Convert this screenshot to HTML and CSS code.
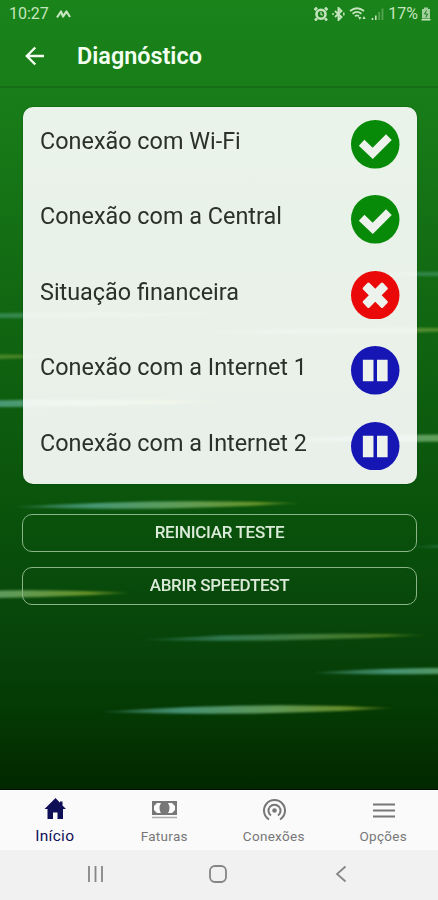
FILE: index.html
```html
<!DOCTYPE html>
<html lang="pt-BR">
<head>
    <meta charset="UTF-8">
    <meta name="viewport" content="width=device-width, initial-scale=1.0">
    <title>Diagnóstico</title>
    <link rel="stylesheet" href="styles.css">
</head>
<body>
    <div class="app">
        <!-- light streaks behind the content -->
        <svg class="streaks" viewBox="0 0 438 790" aria-hidden="true">
            <defs>
                <linearGradient id="streak">
                    <stop offset="0" stop-color="#5fae9c" stop-opacity="0.2"/>
                    <stop offset="0.28" stop-color="#56a890" stop-opacity="0.8"/>
                    <stop offset="0.6" stop-color="#78b06a" stop-opacity="0.8"/>
                    <stop offset="0.85" stop-color="#86a832" stop-opacity="0.75"/>
                    <stop offset="1" stop-color="#86a832" stop-opacity="0.2"/>
                </linearGradient>
                <filter id="soft" x="-5%" y="-100%" width="110%" height="300%">
                    <feGaussianBlur stdDeviation="0.8"/>
                </filter>
            </defs>
            <g fill="url(#streak)" filter="url(#soft)">
                <path opacity="0.55" d="M320 275Q440 269 640 273Q500 278 320 275Z"/>
                <path opacity="0.6" d="M-100 317Q0 310 240 314Q20 320 -100 317Z"/>
                <path opacity="0.75" d="M190 333Q360 325 500 329Q360 336 190 333Z"/>
                <path opacity="0.65" d="M-230 360Q-60 351 70 356Q-80 364 -230 360Z"/>
                <path d="M-90 405Q20 396 220 402Q20 410 -90 405Z"/>
                <path d="M250 440Q430 431 570 437Q430 445 250 440Z"/>
                <path d="M12 507Q160 498 302 503Q160 512 12 507Z"/>
                <path opacity="0.7" d="M410 547Q480 541 640 545Q500 550 410 547Z"/>
                <path d="M-160 597Q0 586 132 593Q0 601 -160 597Z"/>
                <path opacity="0.65" d="M140 640Q280 631 430 635Q280 643 140 640Z"/>
                <path d="M312 673Q400 665 600 669Q420 677 312 673Z"/>
                <path d="M100 712Q250 701 395 708Q250 717 100 712Z"/>
            </g>
        </svg>

        <header>
            <div class="status">
                <span>10:27</span>
                <svg class="activity" width="16" height="10" viewBox="0 0 16 10">
                    <path d="M1 8.500L5 2.500L7 7.500L10.500 2.500L14 8" fill="none" stroke="currentColor" stroke-width="2.200" stroke-linejoin="round"/>
                </svg>
                <div class="status-icons">
                    <svg width="14" height="14" viewBox="0 0 14 14">
                        <path d="M0.500 3L3 0.500M13.500 3L11 0.500M3 11.500L1 13.500M11 11.500l2 2" stroke="currentColor" stroke-width="2.500"/>
                        <circle cx="7" cy="7.200" r="4.500" fill="none" stroke="currentColor" stroke-width="2.600"/>
                        <path d="M7 4.800v2.600l1.800.9" fill="none" stroke="currentColor" stroke-width="1.200"/>
                    </svg>
                    <svg width="13" height="14" viewBox="0 0 13 14">
                        <path d="M3 4l6.500 6L6.500 13V1l3 3L3 10" fill="none" stroke="currentColor" stroke-width="1.900"/>
                        <path d="M1 6v2M11.800 5.500v3" stroke="currentColor" stroke-width="1.500"/>
                    </svg>
                    <svg width="18" height="14" viewBox="0 0 18 14">
                        <path d="M1 4Q8 -1.500 15 4M3.500 6.800Q8 3 12.500 6.800M6 9.300Q8 7.500 10 9.300" fill="none" stroke="currentColor" stroke-width="1.800"/>
                        <path d="M10.800 13l-1.600-3h3.200zM15 9l-1.600 3h3.200z" fill="currentColor"/>
                    </svg>
                    <svg width="13" height="14" viewBox="0 0 13 14">
                        <path d="M1.500 11v2M4.800 8.500V13" stroke="currentColor" stroke-width="1.600"/>
                        <path d="M8.200 5v8M11.500 1.500V13" stroke="currentColor" stroke-width="1.800" opacity="0.35"/>
                    </svg>
                    <span class="percent">17%</span>
                    <svg width="10" height="14" viewBox="0 0 10 14">
                        <path d="M3 0.500h4v1.500h2v9.500H1V2h2z" fill="currentColor" opacity="0.8"/>
                        <path d="M0.500 12h9v1.500h-9z" fill="currentColor"/>
                        <path d="M5.500 3.500L3.500 7h3L4.800 10.500" fill="none" stroke="#1a7c1a"/>
                    </svg>
                </div>
            </div>
            <div class="toolbar">
                <svg class="back" width="20" height="20" viewBox="0 0 20 20">
                    <path d="M19 10H2M10.300 1.500L1.800 10l8.500 8.500" fill="none" stroke="currentColor" stroke-width="2.400"/>
                </svg>
                <h1>Diagnóstico</h1>
            </div>
        </header>

        <main>
            <ul class="card">
                <li>
                    <span>Conexão com Wi-Fi</span>
                    <svg class="result ok" viewBox="0 0 48 48">
                        <circle cx="24" cy="24" r="24"/>
                        <path d="M10.500 22.500L21.500 33L37.500 17"/>
                    </svg>
                </li>
                <li>
                    <span>Conexão com a Central</span>
                    <svg class="result ok" viewBox="0 0 48 48">
                        <circle cx="24" cy="24" r="24"/>
                        <path d="M10.500 22.500L21.500 33L37.500 17"/>
                    </svg>
                </li>
                <li>
                    <span>Situação financeira</span>
                    <svg class="result error" viewBox="0 0 48 48">
                        <circle cx="24" cy="24" r="24"/>
                        <g transform="rotate(45 24 24)">
                            <rect x="10" y="19.500" width="28" height="9" rx="1.500"/>
                            <rect x="19.500" y="10" width="9" height="28" rx="1.500"/>
                        </g>
                    </svg>
                </li>
                <li>
                    <span>Conexão com a Internet 1</span>
                    <svg class="result paused" viewBox="0 0 48 48">
                        <circle cx="24" cy="24" r="24"/>
                        <path d="M17 13.500V35M31 13.500V35"/>
                    </svg>
                </li>
                <li>
                    <span>Conexão com a Internet 2</span>
                    <svg class="result paused" viewBox="0 0 48 48">
                        <circle cx="24" cy="24" r="24"/>
                        <path d="M17 13.500V35M31 13.500V35"/>
                    </svg>
                </li>
            </ul>
            <button class="btn">REINICIAR TESTE</button>
            <button class="btn">ABRIR SPEEDTEST</button>
        </main>
    </div>

    <nav class="tabs">
        <a class="tab active">
            <svg width="26" height="24" viewBox="0 0 26 24">
                <path d="M13.500 0L2.500 11h3v10h5.500v-6.500h4.500V21H21V11h3l-3.500-3.500V3.500H18v1.200z" fill="currentColor"/>
            </svg>
            <span>Início</span>
        </a>
        <a class="tab">
            <svg width="26" height="24" viewBox="0 0 26 24">
                <path d="M1 3h25v14H1z" fill="currentColor"/>
                <path d="M6 5h4Q7 10 10 15H6L3 12V8zM21 5h-4Q20 10 17 15H21l3-3V8z" fill="#fafafa"/>
                <path d="M1 19.500h25" stroke="currentColor" stroke-width="1.500" opacity="0.6"/>
            </svg>
            <span>Faturas</span>
        </a>
        <a class="tab">
            <svg width="26" height="24" viewBox="0 0 26 24">
                <circle cx="13.500" cy="12.500" r="2.300" fill="currentColor"/>
                <path d="M10 17.500A6 6 0 1 1 17 17.500M8 21.500A10.500 10.500 0 1 1 19 21.500" fill="none" stroke="currentColor" stroke-width="2"/>
            </svg>
            <span>Conexões</span>
        </a>
        <a class="tab">
            <svg width="26" height="24" viewBox="0 0 26 24">
                <path d="M3 6.500h22M3 12.500h22M3 18.500h22" stroke="currentColor" stroke-width="2"/>
            </svg>
            <span>Opções</span>
        </a>
    </nav>

    <div class="system-bar">
        <svg width="18" height="18" viewBox="0 0 18 18">
            <path d="M2 1v16M8.500 1v16M15 1v16"/>
        </svg>
        <svg width="20" height="18" viewBox="0 0 20 18">
            <rect x="1" y="1" width="16" height="16" rx="5"/>
        </svg>
        <svg width="18" height="18" viewBox="0 0 18 18">
            <path d="M13.500 1.500L5 9l8.500 7.500"/>
        </svg>
    </div>
</body>
</html>
```
FILE: styles.css
```css
* {
    margin: 0;
    padding: 0;
    box-sizing: border-box;
}

body {
    font-family: Roboto, sans-serif;
    background-color: #f1f1f1;
    width: 438px;
    height: 900px;
    display: flex;
    flex-direction: column;
    overflow: hidden;
}

.app {
    position: relative;
    height: 790px;
    background: linear-gradient(#1a831a 0, #187d18 100px, #126812 300px, #0a540c 500px, #07440a 640px, #043803 720px, #022800 100%);
    border-bottom: 1px solid #050d05;
}

.streaks {
    position: absolute;
    inset: 0;
    width: 438px;
    height: 790px;
}

header {
    position: relative;
    height: 88px;
    color: #f3fff0;
    border-bottom: 2px solid #166f16;
}

.status {
    display: flex;
    align-items: center;
    height: 27px;
    padding: 0 7px 0 9px;
    font-size: 16px;
    color: #c4e4bd;
}

.activity {
    margin-left: 7px;
}

.status-icons {
    display: flex;
    align-items: center;
    gap: 4px;
    margin-left: auto;
}

.percent {
    margin-right: -1px;
}

.toolbar {
    display: flex;
    align-items: center;
    height: 58px;
    padding-left: 25px;
}

h1 {
    margin-left: 32px;
    font-size: 23.4px;
    font-weight: 600;
}

main {
    position: relative;
    display: flex;
    flex-direction: column;
    padding: 19px 21px 0 22px;
}

.card {
    height: 377px;
    margin: 0 0 30px 1px;
    list-style: none;
    background-color: rgba(255, 255, 255, 0.91);
    border-radius: 10px;
    box-shadow: 0 0 2px rgba(0, 50, 0, 0.5);
}

.card li {
    display: flex;
    justify-content: space-between;
    height: 75.4px;
    padding: 13px 17.5px 0 17px;
    font-size: 23.4px;
    line-height: 42px;
    color: #2a302a;
}

.result {
    width: 48.5px;
    height: 48.5px;
}

.ok circle {
    fill: #078a07;
}

.ok path {
    fill: none;
    stroke: #edf3ec;
    stroke-width: 8;
}

.error circle {
    fill: #ea0808;
}

.error rect {
    fill: #edf3ec;
}

.paused circle {
    fill: #1616b4;
}

.paused path {
    stroke: #edf3ec;
    stroke-width: 10.5;
}

.btn {
    height: 38px;
    margin-bottom: 15px;
    padding-bottom: 2px;
    font-family: Roboto, sans-serif;
    font-size: 17px;
    font-weight: 500;
    letter-spacing: -0.3px;
    color: #dcebd9;
    background: transparent;
    border: 1px solid #8bb588;
    border-radius: 10px;
}

.tabs {
    display: flex;
    height: 60px;
    background-color: #fafafa;
}

.tab {
    flex: 1;
    display: flex;
    flex-direction: column;
    align-items: center;
    padding-top: 8px;
    font-size: 13.5px;
    letter-spacing: 0.3px;
    color: #777;
}

.tab span {
    line-height: 28px;
}

.tab.active {
    font-size: 15.5px;
    color: #0f0f58;
}

.system-bar {
    display: flex;
    align-items: center;
    justify-content: space-between;
    height: 48px;
    padding: 0 88px 0 87px;
    fill: none;
    stroke: #858585;
    stroke-width: 1.8;
}
```
